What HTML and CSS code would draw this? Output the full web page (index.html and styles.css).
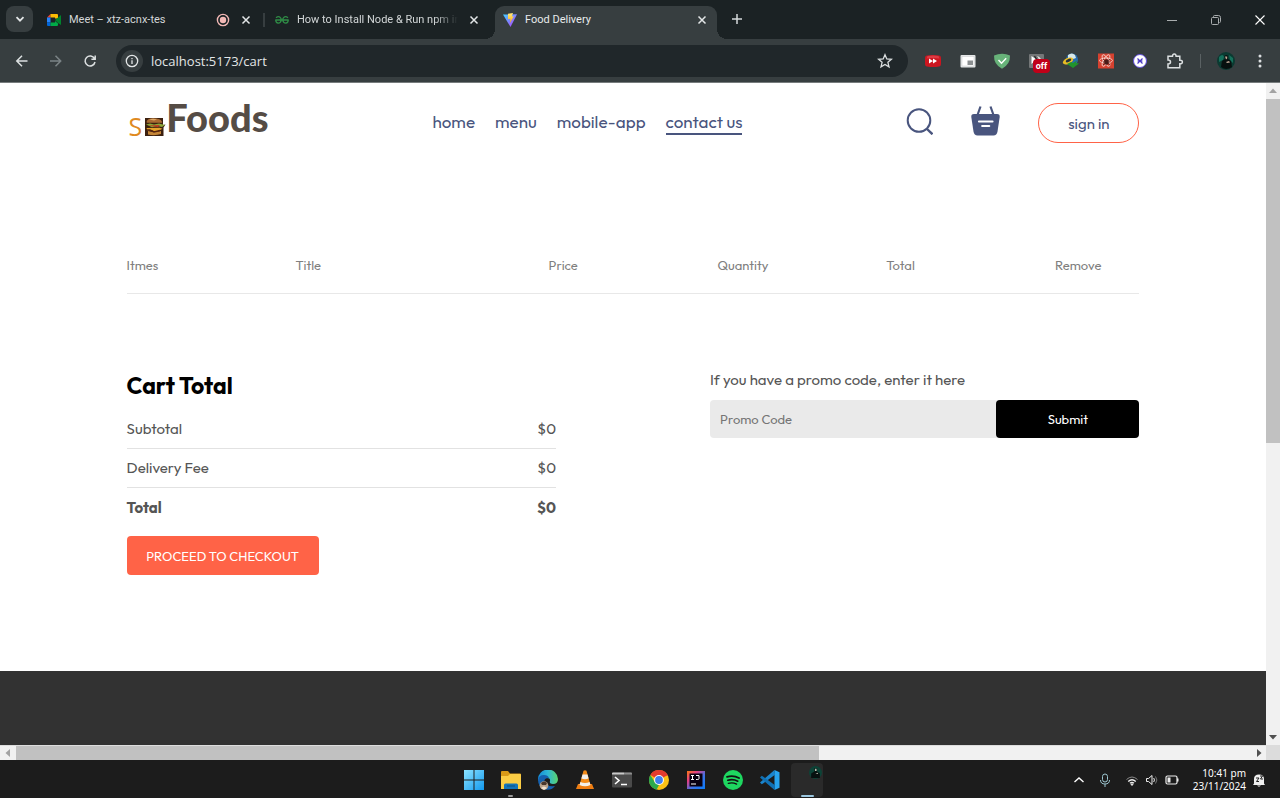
FILE: index.html
```html
<!DOCTYPE html>
<html lang="en">
<head>
<meta charset="utf-8">
<title>Food Delivery</title>
<link rel="stylesheet" href="styles.css">
</head>
<body>
<div class="desktop">
  <header class="tabstrip">
    <button class="tab-search" aria-label="Search tabs"><svg width="10" height="10" viewBox="0 0 10 10"><path d="M1.5 3.2 5 6.7l3.500-3.500" fill="none" stroke="#e3e6e7" stroke-width="1.800"/></svg></button>
    <div class="tab">
      <svg class="favicon" viewBox="0 0 14 14"><path d="M0 4.500 3.500 1v3.500z" fill="#ea4335"/><path d="M3.500 1H10q1 0 1 1v3.500H8V4.500H3.500z" fill="#fbbc04"/><path d="M0 4.500h3.500v5H0z" fill="#2684fc"/><path d="M0 9.500h3.500V13H1q-1 0-1-1z" fill="#0066da"/><path d="M3.500 9.500H8V8l3 2.500V12q0 1-1 1H3.500z" fill="#00ac47"/><path d="M8 7l6-5v10l-3-2z" fill="#00832d"/></svg>
      <span class="tab-label">Meet – xtz-acnx-tes</span>
      <svg class="record" width="14" height="14" viewBox="0 0 14 14"><circle cx="7" cy="7" r="5.600" fill="none" stroke="#f2b8b5" stroke-width="1.400"/><circle cx="7" cy="7" r="3.200" fill="#f2b8b5"/></svg>
      <button class="tab-close" aria-label="Close Meet"><svg viewBox="0 0 16 16"><path d="m4.500 4.500 7 7m0-7-7 7"/></svg></button>
    </div>
    <div class="tab">
      <svg class="favicon" viewBox="0 0 14 14" fill="none" stroke="#2f8d46" stroke-width="1.300"><path d="M.3 7H13.700M1 4.700Q3.300 3 5 4.200 6.400 5.200 6.200 7 5.800 10.200 3.200 10.200.9 10 .7 7M13 4.700Q10.700 3 9 4.200 7.600 5.200 7.800 7q.4 3.200 3 3.200 2.300-.2 2.500-3.200"/></svg>
      <span class="tab-label fade">How to Install Node &amp; Run npm in</span>
      <button class="tab-close" aria-label="Close How to Install Node"><svg viewBox="0 0 16 16"><path d="m4.500 4.500 7 7m0-7-7 7"/></svg></button>
    </div>
    <div class="tab active">
      <svg class="favicon" viewBox="0 0 14 14"><defs><linearGradient id="v1" x2="1" y2="1"><stop stop-color="#41d1ff"/><stop offset="1" stop-color="#bd34fe"/></linearGradient><linearGradient id="v2" x2="0" y2="1"><stop stop-color="#ffea83"/><stop offset="1" stop-color="#ffa800"/></linearGradient></defs><path d="M0 1.500 14 1.300 7.500 14z" fill="url(#v1)"/><path d="m5 .8 5-.8-1.200 3.600 2-.3L7 10l.4-4.200-2.400.5z" fill="url(#v2)"/></svg>
      <span class="tab-label">Food Delivery</span>
      <button class="tab-close" aria-label="Close Food Delivery"><svg viewBox="0 0 16 16"><path d="m4.500 4.500 7 7m0-7-7 7"/></svg></button>
    </div>
    <button class="new-tab" aria-label="New tab"><svg width="16" height="16" viewBox="0 0 16 16"><path d="M8 3v10M3 8h10" stroke="#d5d9da" stroke-width="1.500"/></svg></button>
    <div class="window-controls">
      <button aria-label="Minimize"><svg width="12" height="12" viewBox="0 0 12 12"><path d="M1 6.500h10" stroke="#a9adae"/></svg></button>
      <button aria-label="Restore"><svg width="12" height="12" viewBox="0 0 12 12" fill="none" stroke="#a9adae"><rect x="1.500" y="3.500" width="7" height="7" rx="1"/><path d="M3.500 3V2.500q0-1 1-1h4q2 0 2 2v4q0 1-1 1"/></svg></button>
      <button aria-label="Close"><svg width="12" height="12" viewBox="0 0 12 12"><path d="m1.500 1.500 9 9m0-9-9 9" stroke="#fff" stroke-width="1.100"/></svg></button>
    </div>
  </header>

  <div class="toolbar">
    <div class="nav-buttons">
      <button aria-label="Back"><svg viewBox="0 0 20 20" stroke="#dce0e1"><path d="M15.500 10H5M10 4.800 4.800 10l5.200 5.200"/></svg></button>
      <button aria-label="Forward"><svg viewBox="0 0 20 20" stroke="#7b8486"><path d="M4 10h10.500M9.500 4.800l5.200 5.200-5.200 5.200"/></svg></button>
      <button aria-label="Reload"><svg viewBox="0 0 20 20" stroke="#dce0e1"><path d="M14.500 7.600A5 5 0 1 0 15 11M15.200 4.500v3.800h-3.800"/></svg></button>
    </div>
    <div class="omnibox">
      <span class="site-info"><svg width="14" height="14" viewBox="0 0 14 14"><circle cx="7" cy="7" r="5.700" fill="none" stroke="#e3e6e7" stroke-width="1.300"/><path d="M7 6.300v3.700M7 3.900v1.300" stroke="#e3e6e7" stroke-width="1.300"/></svg></span>
      <input class="url" aria-label="Address" value="localhost:5173/cart">
      <button aria-label="Bookmark"><svg width="16" height="16" viewBox="0 0 16 16"><path d="m8 1.700 1.800 4.200 4.600.4-3.500 3 1.100 4.500L8 11.400l-4 2.400 1.100-4.500-3.500-3 4.600-.4z" fill="none" stroke="#dce0e1" stroke-width="1.300"/></svg></button>
    </div>
    <div class="extensions">
      <svg viewBox="0 0 18 18"><path d="M3 3.500q6-1 12 0 2 0 2 3v5q0 3-2 3-6 1-12 0-2 0-2-3v-5q0-3 2-3z" fill="#cc1620"/><path d="M3.500 4q5.500-1 11 0l1 2.500q-6.500-1-13 0z" fill="#dc3a43"/><path d="m5 6.500 4 2.500-4 2.500zM9 6.500 13 9l-4 2.500z" fill="#fff"/></svg>
      <svg viewBox="0 0 18 18"><rect x="1.500" y="3" width="15" height="12.500" rx="1" fill="#e5e7e8"/><rect x="3" y="4.500" width="12" height="9.500" fill="#fff" stroke="#c7c9ca" stroke-width=".5"/><rect x="8.500" y="8.500" width="5.500" height="4.500" fill="#8b8f91"/></svg>
      <svg viewBox="0 0 18 18"><path d="M1 3.500Q5 1.800 9 1.700t8 1.800q.3 9-8 13.200Q.7 12.500 1 3.500z" fill="#67b279"/><path d="m5.500 8 3 3.300 4.700-5" fill="none" stroke="#fff" stroke-width="1.400"/></svg>
      <span class="badge-host"><svg viewBox="0 0 18 18"><rect x="1" y="2" width="15" height="14" rx="1" fill="#747778"/><path d="m3.500 4 5 3.500-5 4.500z" fill="#fff"/><path d="M9 4q4 1 5 6l-3-1q0-3-2-5z" fill="#e8e8e8"/><path d="m6.500 4 2.500 4" stroke="#222" stroke-width="1.200"/></svg><b class="badge">off</b></span>
      <svg viewBox="0 0 18 18"><circle cx="10" cy="7.500" r="6" fill="#286cab"/><path d="M6 3q4-3 7 0l1 3q-4 2-8 0z" fill="#d8e8e8"/><ellipse cx="6" cy="9" rx="5.500" ry="3" transform="rotate(-25 6 9)" fill="#e9bc24"/><ellipse cx="6.500" cy="8.500" rx="3" ry="1.500" transform="rotate(-25 6.500 8.500)" fill="#26313d"/><path d="m5 12 4-2 2 1 4-2.500-1 2.500 3 .5-6 4.500z" fill="#21932c"/></svg>
      <svg viewBox="0 0 18 18"><path d="M1 1.500h16v15H1z" fill="#d6412f"/><g fill="none" stroke="#f5dfda" stroke-width=".8"><ellipse cx="9" cy="8.500" rx="6.500" ry="2.500"/><ellipse cx="9" cy="8.500" rx="6.500" ry="2.500" transform="rotate(60 9 8.500)"/><ellipse cx="9" cy="8.500" rx="6.500" ry="2.500" transform="rotate(120 9 8.500)"/></g><ellipse cx="9.500" cy="10" rx="2.200" ry="2.800" fill="#4b1c18"/><path d="m6 7 7 6M13 7l-7 6M6 10h7" stroke="#4b1c18" stroke-width=".8"/></svg>
      <svg viewBox="0 0 18 18"><circle cx="9" cy="9" r="6.500" fill="#fff" stroke="#6250dc"/><path d="m6.500 6.500 5 5m0-5-5 5M6.500 9h5" stroke="#4938c4" stroke-width="1.200"/></svg>
      <svg viewBox="0 0 18 18"><path d="M2 4.200h4.500q.1-2.200 1.800-2.200t1.800 2.200h3.700v4q2.600-.1 2.600 1.800t-2.600 1.800v4H2V12q2.500 0 2.500-2T2 8z" fill="none" stroke="#dce0e1" stroke-width="1.500"/></svg>
    </div>
    <span class="divider"></span>
    <svg class="tool-icon" viewBox="0 0 18 18"><circle cx="9" cy="9" r="9" fill="#0b3a31"/><path d="M2 5q4-4 5 0l-1 3-4 2zM12 3l4 3v5l-3-3z" fill="#15705b"/><path d="M7.500 4q2-2 3.500 0v3l3 2 1 6q-6 4-11 0L5 9l3-2z" fill="#07100f"/><path d="M8 4.500h2.200v2L9 7.500zM9 10l3-1 1 1.500-3 .5z" fill="#c0a795"/></svg>
    <button class="tool-icon" aria-label="Menu"><svg viewBox="0 0 18 18" fill="#dce0e1"><circle cx="9" cy="4" r="1.500"/><circle cx="9" cy="9" r="1.500"/><circle cx="9" cy="14" r="1.500"/></svg></button>
  </div>

  <div class="viewport">
    <div class="page">
      <div class="app">
        <nav class="navbar">
          <a class="logo" href="#" aria-label="S Foods"><span class="logo-s">S</span><svg class="logo-burger" viewBox="0 0 21 18"><path d="M0 0h18v7l2.500-.5-2 3V18H0z" fill="#3b2010"/><path d="M1.500 4Q2 .5 8 .3q8 0 9 3.500v1H2z" fill="#a86a32"/><path d="M4 1.500q4-1.500 8 0l-3 1z" fill="#dfa867"/><path d="m1 6.500 4-1 4 1 5-1 6 1.500-3 2-5-1-5 1.200z" fill="#8ba637"/><path d="m3 7.500 12-.5-2 2-4-.5z" fill="#c03a21"/><path d="m1.500 10 13-.3 3 1-5 2.500-3 .2-3-1.500-4 .5z" fill="#e5a32b"/><path d="M3 13q6 2 13 0v3q-6 2-13 .5z" fill="#c58637"/><path d="m2 12 3 0 4 2 6-1.500" fill="none" stroke="#57240f" stroke-width="1.500"/></svg><span class="logo-name">Foods</span></a>
          <div class="menu"><a href="#">home</a><a href="#">menu</a><a href="#">mobile-app</a><a class="current" href="#">contact us</a></div>
          <div class="actions">
            <svg width="27" height="28" viewBox="0 0 27 28" fill="none" stroke="#49557e" stroke-width="2"><circle cx="13" cy="13.500" r="11.300"/><path d="m20.500 21.500 6 5.800" stroke-width="2.400"/></svg>
            <svg width="29" height="30" viewBox="0 0 29 30"><path d="M3 8h23q3 0 2.700 3l-2.200 14.500q-.7 4-4 4h-16q-3.300 0-4-4L.3 11Q0 8 3 8z" fill="#49557e"/><path d="M6.500 9 9.500 .5M22.500 9 19.500 .5" stroke="#49557e" stroke-width="2.200"/><path d="M8 15.500h13.500M11.200 20h7" stroke="#fff" stroke-width="2.200" stroke-linecap="round"/></svg>
            <button class="sign-in">sign in</button>
          </div>
        </nav>
        <table class="items">
          <thead><tr><th class="c2">Itmes</th><th class="c3">Title</th><th class="c2">Price</th><th class="c2">Quantity</th><th class="c2">Total</th><th class="c1">Remove</th></tr></thead>
        </table>
        <main class="cart-bottom">
          <section class="cart-total">
            <h2>Cart Total</h2>
            <div class="rows">
              <div class="row"><span>Subtotal</span><span>$0</span></div>
              <div class="row"><span>Delivery Fee</span><span>$0</span></div>
              <div class="row grand"><b>Total</b><b>$0</b></div>
            </div>
            <button class="checkout">PROCEED TO CHECKOUT</button>
          </section>
          <section class="promo">
            <label for="promo">If you have a promo code, enter it here</label>
            <div class="promo-field"><input id="promo" type="text" placeholder="Promo Code"><button>Submit</button></div>
          </section>
        </main>
      </div>
      <footer class="footer"></footer>
    </div>
    <div class="vbar"><svg viewBox="0 0 14 14"><path d="M3 10h8L7 5.500z" fill="#a3a3a3"/></svg><div class="vtrack"><div class="vthumb"></div></div><svg viewBox="0 0 14 14"><path d="M3 4h8L7 8.500z" fill="#505050"/></svg></div>
    <div class="hbar"><svg viewBox="0 0 14 14"><path d="M10 3v8L5.500 7z" fill="#a3a3a3"/></svg><div class="htrack"><div class="hthumb"></div></div><svg viewBox="0 0 14 14"><path d="M5 3v8l4.500-4z" fill="#505050"/></svg></div>
    <div class="corner"></div>
  </div>

  <footer class="taskbar">
    <div class="apps">
      <button aria-label="Start"><svg viewBox="0 0 20 20"><defs><linearGradient id="w" x2="1" y2="1"><stop stop-color="#8ce3ff"/><stop offset="1" stop-color="#1299ee"/></linearGradient></defs><path d="M0 0h9.500v9.500H0zM10.500 0H20v9.500h-9.500zM0 10.500h9.500V20H0zM10.500 10.500H20V20h-9.500z" fill="url(#w)"/></svg></button>
      <button class="running" aria-label="File Explorer"><svg viewBox="0 0 20 20"><path d="M0 2q0-1 1-1h6l2 2.500h10q1 0 1 1V8H0z" fill="#d99a18"/><path d="M0 6h7l2-2h10q1 0 1 1v14H0z" fill="#fbcd45"/><path d="M3 19v-4q0-1.500 1.500-1.500h11Q17 13.500 17 15v4z" fill="#1574b8"/><path d="M6 16h8" stroke="#0c5080"/></svg></button>
      <button aria-label="Edge"><svg viewBox="0 0 20 20"><defs><linearGradient id="e" x2="1"><stop stop-color="#148bd8"/><stop offset=".5" stop-color="#2fb8d4"/><stop offset="1" stop-color="#5bd36a"/></linearGradient></defs><path d="M0 10A10 10 0 0 1 20 9q0 5-5 5-4 0-3-3 .5-3-3-3-5 0-4 7z" fill="url(#e)"/><path d="M0 10q1-5 6-5 4 0 5 3-5-.5-4.500 4Q8 17 17 16q-4 5-10 3.500Q0 17 0 10z" fill="#1560ad"/><circle cx="6" cy="15.500" r="4.300" fill="#b8a28c"/><path d="M3 13q3-3 6 0l-1 2H4z" fill="#49372d"/><path d="M3 18q3-3 6 0l-3 2z" fill="#eee0cf"/></svg></button>
      <button aria-label="VLC"><svg viewBox="0 0 20 20"><path d="M3 14h14l2 5H1z" fill="#ee7d12"/><path d="M8.500.8q1.500-1 3 0L15.500 15q-5.500 2.500-11 0z" fill="#f48b18"/><path d="m7.500 4.500 5 0 1.100 4q-3.600 1.500-7.200 0zM5.400 12q4.600 2 9.200 0l.9 3q-5.500 2.500-11 0z" fill="#f3efea"/></svg></button>
      <button aria-label="Terminal"><svg viewBox="0 0 20 20"><rect y="2.500" width="20" height="15" rx="1" fill="#4a4a4a"/><path d="M0 3.500q0-1 1-1h11v2H0z" fill="#c9c9c9"/><path d="M12 2.500h7q1 0 1 1v1h-8z" fill="#8f8f8f"/><path d="m3 7 4 3.500L3 14M9 14.500h6" fill="none" stroke="#fff" stroke-width="1.600"/></svg></button>
      <button aria-label="Chrome"><svg viewBox="0 0 20 20"><circle cx="10" cy="10" r="10" fill="#fbc116"/><path d="M10 10 1.300 5A10 10 0 0 1 18.700 5z" fill="#e33b2e"/><path d="M10 5.500h8.900L18.700 5H10z" fill="#e33b2e"/><path d="M1.300 5 6 12.500l4 2.500-2.500 4.700A10 10 0 0 1 1.300 5z" fill="#2da94f"/><circle cx="10" cy="10" r="4.900" fill="#fff"/><circle cx="10" cy="10" r="3.900" fill="#3f7ff0"/></svg></button>
      <button aria-label="IntelliJ IDEA"><svg viewBox="0 0 20 20"><defs><linearGradient id="j" x2="1" y2="1"><stop stop-color="#f97a12"/><stop offset=".3" stop-color="#e53e84"/><stop offset=".6" stop-color="#3d73e8"/><stop offset="1" stop-color="#087cfa"/></linearGradient></defs><path d="M1 1h18v18H1z" fill="url(#j)"/><path d="M3.500 3.500h13v13h-13z" fill="#080010"/><path d="M5 5.500h3M6.500 5.500v4M5 9.500h3M10 5.500h3v3q0 1-1.200 1H10M5 14h5" fill="none" stroke="#fff"/></svg></button>
      <button aria-label="Spotify"><svg viewBox="0 0 20 20"><circle cx="10" cy="10" r="10" fill="#1ed760"/><g fill="none" stroke="#111" stroke-linecap="round"><path d="M4 6.800q6.500-1.800 12 1.200" stroke-width="1.900"/><path d="M4.800 10.200q5.500-1.500 10 1" stroke-width="1.600"/><path d="M5.300 13.300q4.500-1.200 8.300.8" stroke-width="1.300"/></g></svg></button>
      <button aria-label="Visual Studio Code"><svg viewBox="0 0 20 20"><path d="m14.500 0 5 2.200v15.600l-5 2.200z" fill="#27a3ee"/><path d="M14.500 0 0 12.600l1.800 1.700L15 4.700z" fill="#1b85cd"/><path d="M14.500 20 0 7.400l1.800-1.700L15 15.300z" fill="#1071b5"/></svg></button>
      <button class="current-app" aria-label="Food Delivery window"><svg viewBox="0 0 12 12"><circle cx="6" cy="6" r="6" fill="#0c4337"/><path d="M5 2h2.500v3L10 7v4H2V7l3-2z" fill="#07100f"/><path d="M5.500 2.500h1.500v2H5.500zM6 7l2-.7.5 1z" fill="#b9c0b0"/></svg></button>
    </div>
    <div class="tray">
      <svg viewBox="0 0 12 14"><path d="m1.500 9 4.500-4 4.500 4" fill="none" stroke="#fff" stroke-width="1.400"/></svg>
      <svg viewBox="0 0 12 14" fill="none" stroke="#9cc5cf"><rect x="3.500" y="1" width="5" height="8" rx="2.500"/><path d="M1.500 7q0 4 4.500 4t4.500-4M6 11v3"/></svg>
      <div class="status">
        <svg viewBox="0 0 14 14" fill="none" stroke="#eee"><path d="M1.500 6.500q5.500-5 11 0" stroke="#8a8a8a"/><path d="M3.200 8.500q3.800-3.500 7.600 0M5 10.300q2-1.800 4 0" stroke-width="1.300"/><circle cx="7" cy="11.500" r=".8" fill="#eee"/></svg>
        <svg viewBox="0 0 14 14" fill="none" stroke="#eee"><path d="M1.500 5.500h2L7 2.500v9L3.500 8.500h-2zM8.700 5q1.500 2 0 4"/><path d="M10.500 3.500q2.800 3.500 0 7" stroke="#777"/></svg>
        <svg viewBox="0 0 14 14"><rect x="1" y="3" width="11" height="8" rx="1.500" fill="none" stroke="#eee" stroke-width="1.200"/><path d="M2.500 4.500h3v5h-3zM12 5.500h1.500v3H12z" fill="#eee"/></svg>
      </div>
      <div class="clock"><time>10:41 pm</time><time>23/11/2024</time></div>
      <svg viewBox="0 0 12 14"><path d="M1 10.500V6q0-4.500 5-4.500t5 4.500v4.500l1 1.500H0zM4 12.500h4q-2 2.300-4 0z" fill="#f0f0f0"/><path d="M3 5h3L3.500 8.500H6M7 3h2.500L7.500 6H10" fill="none" stroke="#222"/></svg>
    </div>
  </footer>
</div>
</body>
</html>
```
FILE: styles.css
```css
* { box-sizing: border-box; }
body { margin: 0; font-family: "Noto Sans", "Open Sans", sans-serif; }
button { margin: 0; padding: 0; border: 0; background: none; font: inherit; }
svg { display: block; flex: none; }
a { color: inherit; text-decoration: none; }

.desktop { display: flex; flex-direction: column; height: 100vh; overflow: hidden; }

/* Browser tabs */
.tabstrip { display: flex; align-items: flex-end; height: 39px; flex: none; padding-left: 6px; background: #1b2224; font-family: Roboto, sans-serif; font-size: 11px; color: #d3d7d8; }
.tab-search { display: grid; place-items: center; width: 27px; height: 26px; margin: 0 6px 7px 0; border-radius: 8px; background: #373e40; }
.tab { position: relative; display: flex; align-items: center; gap: 8px; width: 222px; height: 33px; margin-right: 6px; padding: 0 7px 6px 8px; }
.tab:first-of-type::after { content: ""; position: absolute; right: -4px; top: 7px; width: 2px; height: 14px; background: #373e40; }
.tab.active { margin-right: 12px; border-radius: 9px 9px 0 0; background: #373e40; color: #e8ebec; }
.tab.active::before, .tab.active::after { content: ""; position: absolute; bottom: 0; width: 10px; height: 10px; }
.tab.active::before { left: -10px; background: radial-gradient(circle at 0 0, transparent 10px, #373e40 10px); }
.tab.active::after { right: -10px; background: radial-gradient(circle at 100% 0, transparent 10px, #373e40 10px); }
.favicon { width: 14px; height: 14px; }
.tab-label { flex: 1; min-width: 0; white-space: nowrap; }
.fade { mask-image: linear-gradient(to right, #000 85%, transparent); }
.tab-close { flex: none; width: 16px; height: 16px; stroke: #e3e6e7; stroke-width: 1.500; }
.new-tab { margin-bottom: 12px; }
.window-controls { display: flex; gap: 32px; margin: 0 14px 13px auto; }

/* Address bar */
.toolbar { display: flex; align-items: center; gap: 16px; height: 44px; flex: none; padding: 0 11px 0 12px; background: #373e40; border-bottom: 1px solid #777c7d; }
.nav-buttons { display: flex; gap: 14px; }
.nav-buttons svg { width: 20px; height: 20px; fill: none; stroke-width: 1.500; }
.omnibox { display: flex; align-items: center; gap: 8px; flex: 1; height: 32px; padding: 0 15px 0 5px; border-radius: 16px; background: #20272a; }
.site-info { display: grid; place-items: center; width: 22px; height: 22px; border-radius: 50%; background: #373e40; }
.url { flex: 1; min-width: 0; padding: 0; border: 0; outline: 0; background: none; color: #e3e6e7; font: 13px "Open Sans", sans-serif; }
.extensions { display: flex; justify-content: space-between; width: 260px; }
.extensions svg, .tool-icon, .tool-icon svg { width: 18px; height: 18px; }
.badge-host { position: relative; }
.badge { position: absolute; left: 5px; top: 7px; padding: 0 3px; border-radius: 4px; background: #c00018; color: #fff; font: bold 9px/14px Roboto, sans-serif; }
.divider { width: 1px; height: 14px; background: #5a6163; }

/* Page area with scroll bars */
.viewport { display: grid; grid-template: minmax(0, 1fr) 15px / minmax(0, 1fr) 14px; flex: 1; min-height: 0; background: #f1f1f1; }
.page { overflow: hidden; background: #fff; color: #555; font-family: Outfit, Lato, sans-serif; }
.vbar { display: flex; flex-direction: column; }
.hbar { display: flex; align-items: center; border-top: 1px solid #ddd; }
.vbar svg, .hbar svg { width: 14px; height: 14px; }
.vtrack, .htrack { flex: 1; }
.vtrack { padding-top: 2px; }
.htrack { height: 100%; padding-left: 2px; }
.vthumb { width: 14px; height: 54.500%; background: #c1c1c1; }
.hthumb { width: 65%; height: 100%; background: #c1c1c1; }
.corner { background: #dcdcdc; }
.app { width: 80%; margin: 0 auto; padding-bottom: 96px; }

/* Navigation */
.navbar { display: flex; justify-content: space-between; align-items: center; height: 80px; color: #49557e; }
.logo { display: flex; align-items: flex-end; padding: 0 0 13px 2px; }
.logo-s { color: #df8a1f; font: 25px/20px "Open Sans", sans-serif; }
.logo-burger { width: 21px; height: 18px; margin-left: 3px; }
.logo-name { color: #554c45; font: 900 38px/38px Lato, sans-serif; }
.menu { display: flex; gap: 20px; font-size: 17px; line-height: 22px; }
.menu a { padding-bottom: 2px; }
.menu .current { border-bottom: 2px solid #49557e; padding-bottom: 0; }
.actions { display: flex; align-items: center; gap: 38px; }
.actions svg { margin-bottom: 4px; }
.sign-in { width: 101px; height: 40px; border: 1px solid tomato; border-radius: 20px; color: #49557e; font-size: 15px; }

/* Cart */
.items { width: 100%; margin-top: 93px; border-collapse: collapse; table-layout: fixed; border-bottom: 1px solid #e8e8e8; color: #808080; font-size: 13px; line-height: 18px; }
.items th { padding: 0 0 19px; font-weight: 400; text-align: left; }
.c1 { width: 8.333%; }
.c2 { width: 16.667%; }
.c3 { width: 25%; }
.cart-bottom { display: flex; gap: 154px; margin-top: 76px; }
.cart-total, .promo { flex: 1; min-width: 0; }
.cart-total h2 { margin: 0; color: #000; font-size: 23px; line-height: 32px; }
.rows { padding-top: 17px; font-size: 15px; line-height: 20px; }
.row { display: flex; justify-content: space-between; padding-bottom: 9px; margin-bottom: 9px; border-bottom: 1px solid #e2e2e2; }
.row.grand { margin: 0; padding: 1px 0 18px; border: 0; }
.checkout { width: 192px; height: 39px; border-radius: 4px; background: tomato; color: #fff; font-size: 13px; }
.promo label { display: block; font-size: 15px; line-height: 20px; }
.promo-field { display: flex; margin-top: 10px; border-radius: 4px; background: #eaeaea; }
.promo-field input { flex: 1; min-width: 0; height: 38px; padding: 0 10px; border: 0; background: none; color: #555; font: inherit; font-size: 13px; }
.promo-field input::placeholder { color: #757575; }
.promo-field button { width: 33.333%; border-radius: 4px; background: #000; color: #fff; font-size: 13px; }
.footer { height: 400px; background: #323232; }

/* Taskbar */
.taskbar { display: grid; grid-template-columns: 1fr auto 1fr; height: 38px; flex: none; padding-top: 2px; background: #1c1c1c; color: #fff; }
.apps { grid-column: 2; display: flex; align-items: center; gap: 5px; }
.apps button { position: relative; display: grid; place-items: center; width: 32px; height: 34px; border-radius: 4px; }
.apps svg { width: 20px; height: 20px; }
.running::after, .current-app::after { content: ""; position: absolute; bottom: 0; width: 5px; height: 2px; border-radius: 1px; background: #9a9a9a; }
.apps .current-app { place-items: start end; padding: 3px 1px; background: #2a2a2a; }
.apps .current-app svg { width: 13px; height: 13px; }
.current-app::after { left: 10px; width: 13px; background: #9bc7e0; }
.tray { display: flex; justify-content: flex-end; align-items: center; gap: 14px; padding-right: 15px; }
.tray svg { width: 12px; height: 14px; }
.status { display: flex; gap: 6px; }
.tray .status svg { width: 14px; }
.clock { display: flex; flex-direction: column; text-align: right; font-size: 10px; line-height: 13px; }
.clock + svg { margin-left: -7px; }
```
